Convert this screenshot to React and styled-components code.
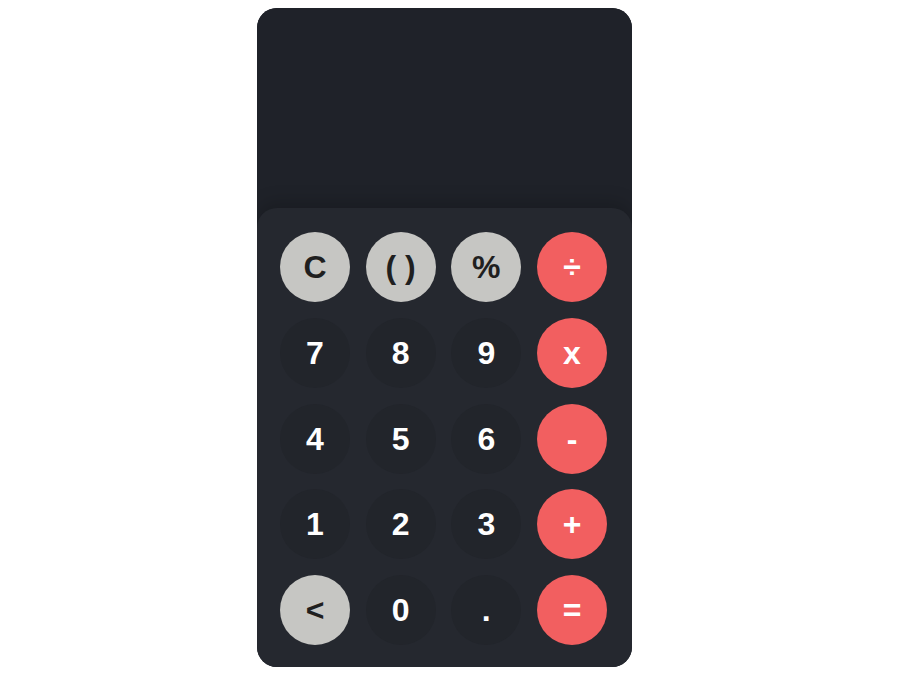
import React from "react";
import styled, { createGlobalStyle } from "styled-components";

const Global = createGlobalStyle`
  html, body { margin: 0; padding: 0; background: #ffffff; }
  body { font-family: "Liberation Sans", Arial, sans-serif; }
`;

const Page = styled.div`
  padding: 8px 0 0 257px;
`;

const Calculator = styled.div`
  width: 375px;
  height: 659px;
  border-radius: 20px;
  overflow: hidden;
  background: #1f2229;
  display: flex;
  flex-direction: column;
`;

const Display = styled.div`
  height: 200px;
  flex: none;
  background: #1f2229;
`;

const Keypad = styled.div`
  flex: 1;
  background: #25282f;
  border-radius: 20px 20px 0 0;
  box-shadow: 0 -6px 18px rgba(0, 0, 0, 0.18);
  display: grid;
  grid-template-columns: repeat(4, 70px);
  grid-auto-rows: 70px;
  column-gap: 15.67px;
  row-gap: 15.75px;
  padding: 24px 0 0 23px;
  align-content: start;
`;

const palette = {
  light: { bg: "#c6c6c3", fg: "#1f1f1f" },
  dark: { bg: "#22252b", fg: "#ffffff" },
  accent: { bg: "#f25f60", fg: "#ffffff" },
};

const Key = styled.button`
  width: 70px;
  height: 70px;
  border: none;
  border-radius: 50%;
  padding: 0;
  margin: 0;
  background: ${(p) => palette[p.$kind].bg};
  color: ${(p) => palette[p.$kind].fg};
  font-family: "Liberation Sans", Arial, sans-serif;
  font-weight: 700;
  font-size: 32px;
  line-height: 1;
  display: flex;
  align-items: center;
  justify-content: center;
  cursor: pointer;
`;

const keys = [
  ["C", "light"], ["( )", "light"], ["%", "light"], ["÷", "accent"],
  ["7", "dark"], ["8", "dark"], ["9", "dark"], ["x", "accent"],
  ["4", "dark"], ["5", "dark"], ["6", "dark"], ["-", "accent"],
  ["1", "dark"], ["2", "dark"], ["3", "dark"], ["+", "accent"],
  ["<", "light"], ["0", "dark"], [".", "dark"], ["=", "accent"],
];

export default function App() {
  return (
    <>
      <Global />
      <Page>
        <Calculator>
          <Display />
          <Keypad>
            {keys.map(([label, kind]) => (
              <Key key={label} $kind={kind}>{label}</Key>
            ))}
          </Keypad>
        </Calculator>
      </Page>
    </>
  );
}
